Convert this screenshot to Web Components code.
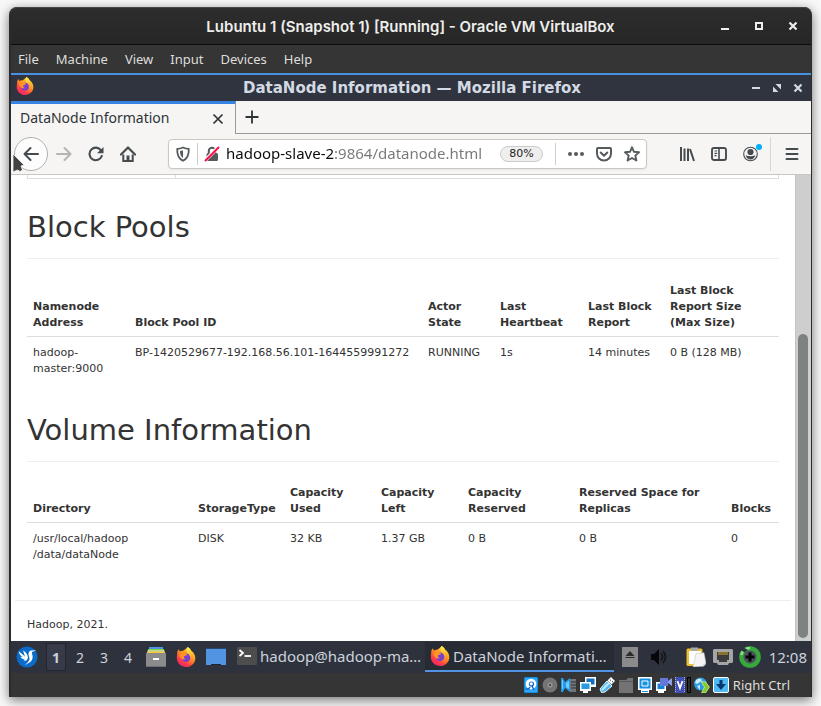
<!DOCTYPE html>
<html lang="en">
<head>
<meta charset="utf-8">
<title>Lubuntu 1 (Snapshot 1) [Running] - Oracle VM VirtualBox</title>
<style>
  html, body { height: 100%; margin: 0; }
  body {
    box-sizing: border-box; min-height: 100vh; padding: 7px 9px 9px;
    display: flex; flex-direction: column; background: #f8f8f8; overflow: hidden;
    font-family: "DejaVu Sans", sans-serif;
  }
</style>
</head>
<body>
<vm-window></vm-window>

<script>
const FIREFOX = `<defs>
  <linearGradient id="o" x1=".8" y1="0" x2=".2" y2="1"><stop offset="0" stop-color="#ffe14a"/><stop offset=".4" stop-color="#ff9a1f"/><stop offset=".75" stop-color="#ff3b47"/><stop offset="1" stop-color="#e8207a"/></linearGradient>
  <linearGradient id="y" x1=".5" y1="0" x2=".6" y2="1"><stop offset="0" stop-color="#fff04f"/><stop offset=".5" stop-color="#ffb52b"/><stop offset="1" stop-color="#ff6a2c"/></linearGradient></defs>
  <path fill="url(#o)" d="M1.2 7.2C1 5.4 1.6 3.6 3 2.3c.1 1 .4 1.6 1 2.2C5 3.8 6 3.600 7.200 3.800 9.100 2.500 10.600 1.500 11.500 0c2.200 1.200 3 2.800 3.300 4.500l.9-.5C18 6 19.300 8.500 19.300 11.200 19.300 16.200 15.200 20 10.200 20 5 20 .8 16 .8 11c0-1.400.1-2.600.4-3.800z"/>
  <path fill="url(#y)" d="M11.500 0c3.800 2 4.500 4.500 5 7.500 1 5-1.500 8.500-5.500 9.200 3-1.500 4.200-4.200 3-7.200-.7-1.700-3-2.600-3.300-5C10.500 2.700 10.700 1.300 11.500 0z"/>
  <circle cx="10" cy="10.800" r="4.300" fill="#7a3fd1"/>
  <path fill="#ff9327" d="M3.200 8.200c1.500-2 3.800-2.600 6.300-1.900 1.200.4 1.700 1.300 1.200 1.900-.6.700-2.200.5-2.700 1.300-.5.900.2 2 1.800 2.600-2.400 1-4.300 0-5.300-1.900z"/>`;

const ICONS = {
  minimize: [12, `<path d="M2 9h8" stroke="currentColor" stroke-width="2"/>`],
  maximize: [12, `<path d="M3 3h6v6H3z" fill="none" stroke="currentColor" stroke-width="2"/>`],
  close: [12, `<path d="M2.500 2.500l7 7m0-7l-7 7" stroke="currentColor" stroke-width="2.200"/>`],
  dash: [12, `<path d="M2 6h8" stroke="currentColor" stroke-width="2"/>`],
  restore: [12, `<path d="M4.500 2H10v5.500zM2 4.500V10h5.500z" fill="currentColor"/>`],
  tabclose: [12, `<path d="M1.500 1.500l9 9m0-9l-9 9" stroke="currentColor" stroke-width="1.700"/>`],
  plus: [16, `<path d="M1.500 8h13M8 1.500v13" stroke="currentColor" stroke-width="1.800"/>`],
  back: [16, `<path d="M15 8H2M7.500 2L1.500 8l6 6" fill="none" stroke="currentColor" stroke-width="2" stroke-linecap="round" stroke-linejoin="round"/>`],
  forward: [16, `<path d="M1 8h13M8.500 2l6 6-6 6" fill="none" stroke="currentColor" stroke-width="2" stroke-linecap="round" stroke-linejoin="round"/>`],
  reload: [16, `<path d="M13 4.300A6.300 6.300 0 1 0 13.800 10" fill="none" stroke="currentColor" stroke-width="2.100" stroke-linecap="round"/><path d="M15.500 1v6.300H9z" fill="currentColor"/>`],
  home: [16, `<path d="M1 8.500L8 1.500l7 7" fill="none" stroke="currentColor" stroke-width="2.200" stroke-linecap="round" stroke-linejoin="round"/><path d="M3.300 8.500V15h9.400V8.500" fill="none" stroke="currentColor" stroke-width="2"/><path d="M6.500 15V9.500h3V15z" fill="currentColor"/>`],
  shield: [16, `<path d="M8 1.500c2 1 4 1.300 5.800 1.300C14 9 12.500 12.800 8 14.800 3.500 12.800 2 9 2.200 2.800 4 2.800 6 2.500 8 1.500z" fill="none" stroke="currentColor" stroke-width="1.800" stroke-linejoin="round"/><path d="M8 4.300c-1 .4-2 .6-3 .7 0 3.500.9 5.700 3 7z" fill="currentColor"/>`],
  lock: [16, `<path d="M4.800 8V5a3.200 3.200 0 0 1 6.400 0v3" fill="none" stroke="currentColor" stroke-width="2"/><rect x="2.500" y="7" width="11.500" height="8" rx="1.500" fill="currentColor"/><path d="M1 14.500L14.500 1" stroke="#fff" stroke-width="3.500"/><path d="M1.500 14.500L14.500 1.500" stroke="#ff0d4a" stroke-width="1.900" stroke-linecap="round"/>`],
  dots: [16, `<g fill="currentColor"><circle cx="2" cy="8" r="2"/><circle cx="8" cy="8" r="2"/><circle cx="14" cy="8" r="2"/></g>`],
  pocket: [16, `<path d="M2 2h12a1 1 0 0 1 1 1v4.500a7 7 0 0 1-14 0V3a1 1 0 0 1 1-1z" fill="none" stroke="currentColor" stroke-width="2"/><path d="M4.700 6.500L8 9.700l3.300-3.200" fill="none" stroke="currentColor" stroke-width="2" stroke-linecap="round" stroke-linejoin="round"/>`],
  star: [16, `<path d="M8 1.300l2 4.500 5 .5-3.700 3.300 1.100 4.900L8 12l-4.400 2.500 1.100-4.900L1 6.300l5-.5z" fill="none" stroke="currentColor" stroke-width="1.900" stroke-linejoin="round"/>`],
  library: [16, `<path d="M2 1v14M5.500 2.500V15M9 2.500V15M11 3l4 12" fill="none" stroke="currentColor" stroke-width="2"/>`],
  sidebar: [16, `<rect x="1" y="2" width="14" height="12" rx="2" fill="none" stroke="currentColor" stroke-width="1.900"/><path d="M8 2v12" stroke="currentColor" stroke-width="1.600"/><path d="M3.500 5h2.700M3.500 7.300h2.700M3.500 9.600h2" stroke="currentColor" stroke-width="1.200"/>`],
  account: [16, `<circle cx="7.500" cy="8" r="6.800" fill="none" stroke="currentColor" stroke-width="1.100"/><circle cx="7.500" cy="6" r="3.100" fill="currentColor"/><path d="M2.800 9.300c3 1.200 6.400 1.200 9.400 0-.3 2.600-2.300 4.200-4.700 4.200s-4.400-1.600-4.700-4.200z" fill="currentColor"/>`],
  menu: [16, `<path d="M2.500 3h11M2.500 8h11M2.500 13h11" stroke="currentColor" stroke-width="2" stroke-linecap="round"/>`],
  firefox: [20, FIREFOX],
  lubuntu: [22, `<circle cx="11" cy="11" r="10.500" fill="#0b6bc8"/><path fill="#fff" d="M2.500 5l6.500 5.500L7 4.500c3 1.500 4.500 4 5 7l-1 2.500c-1 .8-2.500.8-3.500.3l1.500-.8c-2.200 0-3.700-1-4.500-2.800l2.200.6C4.500 10 3 7.500 2.500 5z"/><path fill="#fff" d="M12.500 8.500c0-3 1.500-4.300 3.500-4l4.500-.3-4 1.500c-1 .6-.6 1.700-.2 3 1 3.800-.3 6.500-3.300 8l-4.500 2.500c2.500-2.200 4.500-3.700 5-6 .3-1.700-1-3-1-4.700z"/>`],
  files: [20, `<path fill="#5294e2" d="M3 0h14v3H3z"/><path fill="#7ccf4f" d="M2 2h16v3H2z"/><path fill="#e9efd0" d="M1.500 3.500h17v1h-17z"/><path fill="#ffc24a" d="M1 4.500h18V7H1z"/><path fill="#8b8b8b" d="M0 6h20v13.500H0z"/><path stroke="#707070" d="M0 19.500h20"/><path d="M7 12h6" stroke="#fff" stroke-width="2"/>`],
  desktop: [20, `<path fill="#5294e2" d="M0 2h20v16h-5v-1H5v1H0z"/><path stroke="#274a75" d="M0 1.500h20"/><path fill="#1d2430" d="M5.500 17h9v1h-9z"/>`],
  terminal: [20, `<rect y="1" width="20" height="18" rx="1" fill="#4d4d4d"/><path d="M2.500 4l3.500 3-3.500 3" fill="none" stroke="#fff" stroke-width="1.800"/><path d="M7.500 10H14" stroke="#fff" stroke-width="1.800"/>`],
  eject: [20, `<rect x="2" width="16" height="20" fill="#8b8b8b"/><path d="M5.500 9h9L10 4zM5.500 10h9v1h-9z" fill="#2c2c2c"/>`],
  volume: [20, `<path d="M3 7h3l5-5v16l-5-5H3z" fill="#070709"/><path d="M13 6.500q3 3.500 0 7M15 4q5 6 0 12" fill="none" stroke="#15171d" stroke-width="1.800"/>`],
  clipboard: [20, `<rect x=".5" y="1.500" width="16" height="17.500" rx="1.500" fill="#e9c131"/><path fill="#fff" d="M3 4h12v13H3z"/><path fill="#aaa" d="M5 .5h7v3.500H5z"/><path fill="#f4f4f4" stroke="#bbb" stroke-width=".5" d="M10 6.500l8-.7 2 10.700-2.500 2.800-10.500.7z"/><path fill="#ccc" d="M17.500 19.500v-3l2.500.3z"/>`],
  network: [20, `<path fill="#a5a5a5" d="M1 2h18l1 1v12l-1 1h-3l-1 2H5l-1-2H1l-1-1V3z"/><path d="M4 5h12v8h-2v2H6v-2H4z" fill="#3c3c3c"/><path d="M6 5v3M8 5v3M10 5v3M12 5v3M14 5v3" stroke="#d3ac25"/>`],
  update: [22, `<circle cx="11" cy="11" r="10.800" fill="#37a83c"/><path d="M11 2a9 9 0 0 0-8.700 7" fill="none" stroke="#8adf84" stroke-width="2.500"/><circle cx="11" cy="11" r="6.500" fill="#4a525e"/><path d="M11 6.500v9M6.500 11h9" stroke="#050505" stroke-width="3"/><path d="M4.500 1.500L9 4 5.500 6.500 2 4z" fill="#2e323d"/>`],
  disk: [16, `<rect x="1" y="0" width="14" height="16" rx="1.500" fill="#108cea"/><path d="M2 1h12v14H2z" fill="#35a8f4"/><circle cx="8" cy="7" r="5.300" fill="#fff"/><circle cx="8.500" cy="7" r="2.600" fill="#1268c8"/><path d="M2.500 11.500c2 1.500 3.500.5 4.500-1.500M8 7l3 6" stroke="#1268c8" stroke-width="1.500" fill="none"/><circle cx="8.300" cy="6.800" r="1.500" fill="#fff"/>`],
  optical: [16, `<circle cx="8" cy="8" r="7.500" fill="#747474"/><circle cx="8" cy="8" r="2.500" fill="#969696"/><circle cx="8" cy="8" r="1" fill="#303030"/>`],
  audio: [16, `<path fill="#70767a" d="M9 2h6v13H9z"/><path d="M10 5h5M10 8h5M10 11h5" stroke="#303438"/><path fill="#249be8" d="M0 1h2l2 4 5-4v14l-5-4-2 4H0z"/><path fill="#74caff" d="M1 3h1v9H1zM5 6l3-2v8l-3-2z"/>`],
  nic: [16, `<path fill="#fff" d="M5 0h11v10H5z"/><path fill="#126fbb" d="M6.500 1.500h8v6h-8z"/><path fill="#fff" d="M0 5h11v9H8v2H3v-2H0z"/><path fill="#2998e5" d="M1.500 6.500h8v5.500h-8z"/>`],
  usb: [16, `<path d="M2.500 15.500L1 12l7-8 5 5-7 6z" fill="#4cb7f2" stroke="#e8f8ff"/><path d="M3 13l7-7" stroke="#c2edff" stroke-width="2"/><path d="M8.500 3.500L12 0l4 4-3.500 3.500z" fill="#fff"/><path d="M11.500 2.700v1M13.500 4.200v1" stroke="#333"/>`],
  folder: [16, `<path fill="#737373" d="M1 3h7l2-2h5v15H1z"/><path stroke="#5c5c5c" d="M1 4.500h14" />`],
  display: [16, `<path fill="#fff" d="M1 0h14v13h-3v3H4v-3H1z"/><path fill="#1591e1" d="M2.500 1.500h11v10h-11z"/><path fill="none" stroke="#fff" d="M5 4h6v5H5z"/><path fill="#1591e1" d="M5 14h6v1H5z"/>`],
  recording: [16, `<path fill="#fff" d="M0 5h10v9H8v2H2v-2H0z"/><path fill="#1284da" d="M1.500 6.500h7V12h-7z"/><path fill="#6478d8" d="M4 1h8v8H4z"/><path fill="#8fa0ee" d="M12 4l4-3v8l-4-3z"/>`],
  cpu: [16, `<path fill="#4050b5" d="M0 0h10v16H0z"/><path d="M.5 0v16M9.500 0v16" stroke="#a8b4f2" stroke-dasharray="1 1"/><path d="M2.500 4L5 11l2.500-7" fill="none" stroke="#fff" stroke-width="1.800"/><path fill="#2c2c2c" stroke="#000" d="M12.500.500h3v15h-3z"/>`],
  mouse: [16, `<circle cx="6.500" cy="7" r="6.500" fill="#2c9be0"/><path fill="#c9ecff" d="M2 3c3-2 5-1.500 6 0L6 5 3 7 1 6zM3 9l3-1v5z"/><path fill="#80cc28" stroke="#d9f5b0" stroke-width=".7" d="M7 4.500l4.500.5 4 5-4 6H7.500l3-6z"/>`],
  keyboard: [16, `<rect x=".5" y=".5" width="15" height="15" rx="1.500" fill="#4dbaf5" stroke="#fff"/><path fill="#063a70" d="M6.500 3h3v4H13l-5 6-5-6h3.500z"/>`],
};

// Registers an element whose open shadow root holds the given styles and markup.
function define(tag, css, html, setup) {
  const template = document.createElement('template');
  template.innerHTML = `<style>*{box-sizing:border-box}button{border:0;background:none;padding:0;margin:0;font:inherit;color:inherit}${css}</style>${html}`;
  customElements.define(tag, class extends HTMLElement {
    connectedCallback() {
      if (this.shadowRoot) return;
      this.attachShadow({ mode: 'open' }).append(template.content.cloneNode(true));
      if (setup) setup.call(this, this.shadowRoot);
    }
  });
}

define('ui-icon', `:host{display:inline-flex;flex:none}svg{display:block}`, `<svg aria-hidden="true"></svg>`, function (root) {
  const [box, art] = ICONS[this.getAttribute('name')];
  const size = this.getAttribute('size') || box;
  const svg = root.querySelector('svg');
  svg.setAttribute('viewBox', `0 0 ${box} ${box}`);
  svg.setAttribute('width', size);
  svg.setAttribute('height', size);
  svg.innerHTML = art;
});

define('icon-button', `
  :host{display:inline-flex;flex:none;width:32px;height:32px}
  button{flex:1;display:flex;align-items:center;justify-content:center;border-radius:2px}
  :host([round]) button{border:1px solid #b3b1ae;border-radius:50%;background:#fdfdfd}`,
  `<button type="button"></button>`, function (root) {
    const b = root.querySelector('button');
    b.setAttribute('aria-label', this.getAttribute('label'));
    b.innerHTML = `<ui-icon name="${this.getAttribute('icon')}" size="${this.getAttribute('size') || 16}"></ui-icon>`;
  });

define('title-bar', `
  :host{display:grid;grid-template-columns:1fr auto 1fr;align-items:center;flex:none}
  ::slotted(h1),::slotted(h2){margin:0;font:inherit;white-space:nowrap}
  .end{display:flex;justify-content:flex-end}`,
  `<div><slot name="start"></slot></div><slot></slot><div class="end"><slot name="end"></slot></div>`);

define('menu-bar', `
  :host{display:flex;flex:none;height:28px;padding:0 7px;background:#353535;color:#dededc;font:13px "Noto Sans",sans-serif}
  nav{display:flex;gap:17px}`,
  `<nav aria-label="Machine menu"></nav>`, function (root) {
    root.querySelector('nav').innerHTML = this.getAttribute('items').split(',').map(t => `<menu-item>${t}</menu-item>`).join('');
  });
define('menu-item', `:host{display:flex}`, `<button type="button"><slot></slot></button>`);

define('tab-strip', `
  :host{display:flex;flex:none;height:33px;background:#f6f5f4;color:#2e3436}
  .tab{display:flex;align-items:center;width:225px;padding:0 11px 0 9px;border-top:3px solid #3584e4;border-right:1px solid #9c9a98}
  .tab button{flex:1;padding-bottom:4px;text-align:left;font:14px "Noto Sans",sans-serif}
  .rest{flex:1;display:flex;align-items:center;border-bottom:1px solid #9c9a98}
  .close{width:12px;height:12px}`,
  `<div class="tab"><button type="button" role="tab" aria-selected="true"><slot></slot></button><icon-button class="close" icon="tabclose" size="12" label="Close tab"></icon-button></div>
   <div class="rest"><icon-button icon="plus" size="16" label="New tab"></icon-button></div>`);

define('address-bar', `
  :host{display:flex;align-items:center;flex:1;min-width:0;height:30px;border:1px solid #cdc7c2;border-radius:4px;background:#fff;color:#555a5c;box-shadow:0 1px 2px #0001}
  icon-button{width:28px;height:28px}
  i{flex:none;width:1px;height:22px;background:#d0ccc8}
  input{flex:1;min-width:0;height:26px;padding:0 0 2px;border:0;outline:0;font:15px "Noto Sans",sans-serif;color:#0c0c0d;
    background:linear-gradient(90deg,#0c0c0d 109px,#777 109px);-webkit-background-clip:text;background-clip:text;-webkit-text-fill-color:transparent}
  .zoom{flex:none;width:43px;height:16px;border:1px solid #ccc;border-radius:8px;background:#eee;color:#222;font:11px/14px "DejaVu Sans",sans-serif;margin-right:12px}`,
  `<icon-button icon="shield" label="Tracking protection"></icon-button><i></i>
   <icon-button icon="lock" label="Connection is not secure"></icon-button>
   <input type="text" aria-label="Address" value="hadoop-slave-2:9864/datanode.html" spellcheck="false">
   <button class="zoom" type="button">80%</button><i></i><span style="width:6px"></span>
   <icon-button icon="dots" label="Page actions"></icon-button>
   <icon-button icon="pocket" label="Save to Pocket"></icon-button>
   <icon-button icon="star" label="Bookmark this page"></icon-button>`);

define('nav-bar', `
  :host{display:flex;align-items:center;flex:none;height:41px;padding:0 3px;background:#f6f5f4;border-bottom:1px solid #cdc7c2;color:#454b4e;position:relative}
  .back{width:34px;height:34px}
  .off{color:#b4b4b2}
  address-bar{margin:0 24px}
  i{width:1px;height:34px;margin:0 5px 0 3px;background:#dad6d2}
  .account{position:relative;display:flex}
  .badge{position:absolute;right:5px;top:6px;width:6px;height:6px;border-radius:50%;background:#00b0fa}
  .pointer{position:absolute;left:1px;top:19px}`,
  `<icon-button class="back" round icon="back" label="Back"></icon-button>
   <icon-button class="off" icon="forward" label="Forward"></icon-button>
   <icon-button icon="reload" label="Reload"></icon-button>
   <icon-button icon="home" label="Home"></icon-button>
   <address-bar></address-bar>
   <icon-button icon="library" label="Library"></icon-button>
   <icon-button icon="sidebar" label="Sidebars"></icon-button>
   <span class="account"><icon-button icon="account" label="Account"></icon-button><span class="badge"></span></span>
   <i></i><icon-button icon="menu" label="Open menu"></icon-button>
   <svg class="pointer" width="14" height="22" viewBox="0 0 14 22" aria-hidden="true"><path d="M1 1l11 11-3 1 1.500 4-2.500 1.500L5.500 17 1 19z" fill="#424242" stroke="#f5f5f5" stroke-width=".8"/></svg>`);

define('section-heading', `
  :host{display:block;border-bottom:1px solid #eee;padding-bottom:13px}
  h2{margin:0;font-size:29px;line-height:36px;font-weight:400;color:#333}`,
  `<h2><slot></slot></h2>`);

define('data-table', `
  :host{display:block}
  table{width:100%;table-layout:fixed;border-collapse:collapse;font-size:11px;line-height:16px;color:#333}
  th,td{padding:6px;text-align:left}
  th{vertical-align:bottom;padding-bottom:5px;border-bottom:1px solid #ddd}
  td{vertical-align:top;padding-top:8px}`,
  `<table><colgroup></colgroup><thead><tr></tr></thead><tbody><tr></tr></tbody></table>`, function (root) {
    const list = name => this.getAttribute(name).split('|');
    root.querySelector('colgroup').innerHTML = list('widths').map(w => `<col style="width:${w}px">`).join('');
    root.querySelector('thead tr').innerHTML = list('heads').map(t => `<th scope="col">${t}</th>`).join('');
    root.querySelector('tbody tr').innerHTML = list('cells').map(t => `<td>${t}</td>`).join('');
  });

define('page-view', `
  :host{display:flex;flex:1;min-height:0;background:#fff}
  main{flex:1;min-width:0;padding:0 4px;overflow:hidden;color:#333}
  .body{padding:0 12px}
  .stub{display:flex;height:4px;border:1px solid #ddd;border-top:0}
  .stub span{width:148px;border-right:1px solid #ddd}
  .pools{margin-top:30px}
  .pooltable{margin-top:18px}
  .volumes{margin-top:29px}
  .voltable{margin-top:17px}
  footer{margin-top:31px;padding:16px 12px;border-top:1px solid #eee;font-size:11px;line-height:16px}
  .track{flex:none;display:flex;flex-direction:column;width:16px;padding:159px 3px 3px 2px;border-left:1px solid #c6c4be;background:#cecece}
  .thumb{flex:1;border-radius:5px;background:#7e8281}`,
  `<main><div class="body"><div class="stub"><span></span></div>
    <section-heading class="pools">Block Pools</section-heading>
    <data-table class="pooltable" widths="102|293|72|88|82|115"
      heads="Namenode Address|Block Pool ID|Actor State|Last Heartbeat|Last Block Report|Last Block Report Size (Max Size)"
      cells="hadoop-master:9000|BP-1420529677-192.168.56.101-1644559991272|RUNNING|1s|14 minutes|0 B (128 MB)"></data-table>
    <section-heading class="volumes">Volume Information</section-heading>
    <data-table class="voltable" widths="165|92|91|87|111|152|54"
      heads="Directory|StorageType|Capacity Used|Capacity Left|Capacity Reserved|Reserved Space for Replicas|Blocks"
      cells="/usr/local/hadoop<wbr>/data/dataNode|DISK|32 KB|1.37 GB|0 B|0 B|0"></data-table>
   </div><footer>Hadoop, 2021.</footer></main>
   <div class="track"><div class="thumb"></div></div>`);

define('task-button', `
  :host{display:flex;flex:none;height:30px}
  button{flex:1;display:flex;align-items:center;gap:3px;padding:0 5px;white-space:nowrap;overflow:hidden;border-bottom:2px solid transparent}
  :host([active]) button{background:#272b34;border-bottom-color:#5294e2}`,
  `<button type="button"><slot name="icon"></slot><span><slot></slot></span></button>`);

define('task-bar', `
  :host{display:flex;align-items:center;flex:none;height:32px;padding:0 4px 0 5px;background:#2e323d;color:#cdd2dc;font:15px "Noto Sans",sans-serif}
  .spaces{display:flex;gap:4px;margin:0 8px}
  .spaces button{width:20px;height:28px;font-size:14px}
  .spaces button:first-child{background:#373b49;border:1px solid #22262e;font-weight:700}
  .launch{display:flex;gap:10px;align-items:center}
  .launch icon-button{width:20px}
  .term{margin-left:6px;width:193px}
  .fox{width:189px}
  .tray{display:flex;align-items:center;margin-left:auto}
  time{margin-left:8px}`,
  `<icon-button style="width:22px" icon="lubuntu" size="22" label="Application menu"></icon-button>
   <div class="spaces"><button type="button">1</button><button type="button">2</button><button type="button">3</button><button type="button">4</button></div>
   <div class="launch"><icon-button icon="files" size="20" label="File manager"></icon-button><icon-button icon="firefox" size="20" label="Firefox"></icon-button><icon-button icon="desktop" size="20" label="Show desktop"></icon-button></div>
   <task-button class="term"><ui-icon slot="icon" name="terminal" size="20"></ui-icon>hadoop@hadoop-ma…</task-button>
   <task-button class="fox" active><ui-icon slot="icon" name="firefox" size="20"></ui-icon>DataNode Informati…</task-button>
   <div class="tray">
    <ui-icon name="eject"></ui-icon><ui-icon style="margin:0 18px 0 8px" name="volume"></ui-icon>
    <ui-icon name="clipboard"></ui-icon><ui-icon style="margin:0 6px 0 7px" name="network"></ui-icon><ui-icon name="update"></ui-icon>
    <time>12:08</time></div>`);

define('status-bar', `
  :host{display:flex;align-items:center;justify-content:flex-end;flex:none;height:24px;padding:0 21px 0 0;background:#353535;color:#dededc;font:13px "Noto Sans",sans-serif}
  .icons{display:flex;gap:3px;margin-right:4px}`,
  `<div class="icons"></div><span>Right Ctrl</span>`, function (root) {
    root.querySelector('.icons').innerHTML = ['disk','optical','audio','nic','usb','folder','display','recording','cpu','mouse','keyboard']
      .map(n => `<ui-icon name="${n}" size="16"></ui-icon>`).join('');
  });

define('vm-window', `
  :host{display:flex;flex-direction:column;flex:1;min-height:0;border:solid #2b2b2b;border-width:0 1px 0 2px;border-radius:8px 8px 0 0;background:#353535;box-shadow:0 3px 12px rgba(0,0,0,.55)}
  .outer{height:38px;padding-right:1px;border-radius:7px 7px 0 0;border-top:1px solid #444;border-bottom:1px solid #0c0c0c;background:linear-gradient(#2d2d2d,#262626);color:#eeeeec;font:600 15px Inter,sans-serif}
  .outer icon-button{width:34px}
  .guest{flex:1;min-height:0;display:flex;flex-direction:column;border-top:2px solid #4a90e2}
  .inner{height:26px;padding:0 3px 0 5px;background:#2f343f;color:#d3dae3;font:700 15px "DejaVu Sans",sans-serif}
  .inner icon-button{width:21px;height:24px}`,
  `<title-bar class="outer"><h1>Lubuntu 1 (Snapshot 1) [Running] - Oracle VM VirtualBox</h1>
     <icon-button slot="end" icon="minimize" size="12" label="Minimize"></icon-button><icon-button slot="end" icon="maximize" size="12" label="Maximize"></icon-button><icon-button slot="end" icon="close" size="12" label="Close"></icon-button></title-bar>
   <menu-bar items="File,Machine,View,Input,Devices,Help"></menu-bar>
   <div class="guest">
    <title-bar class="inner"><ui-icon slot="start" name="firefox" size="18"></ui-icon><h2>DataNode Information — Mozilla Firefox</h2>
     <icon-button slot="end" icon="dash" size="12" label="Minimize"></icon-button><icon-button slot="end" icon="restore" size="12" label="Restore"></icon-button><icon-button slot="end" icon="close" size="12" label="Close"></icon-button></title-bar>
    <tab-strip>DataNode Information</tab-strip>
    <nav-bar></nav-bar>
    <page-view></page-view>
    <task-bar></task-bar>
   </div>
   <status-bar></status-bar>`);
</script>
</body>
</html>
